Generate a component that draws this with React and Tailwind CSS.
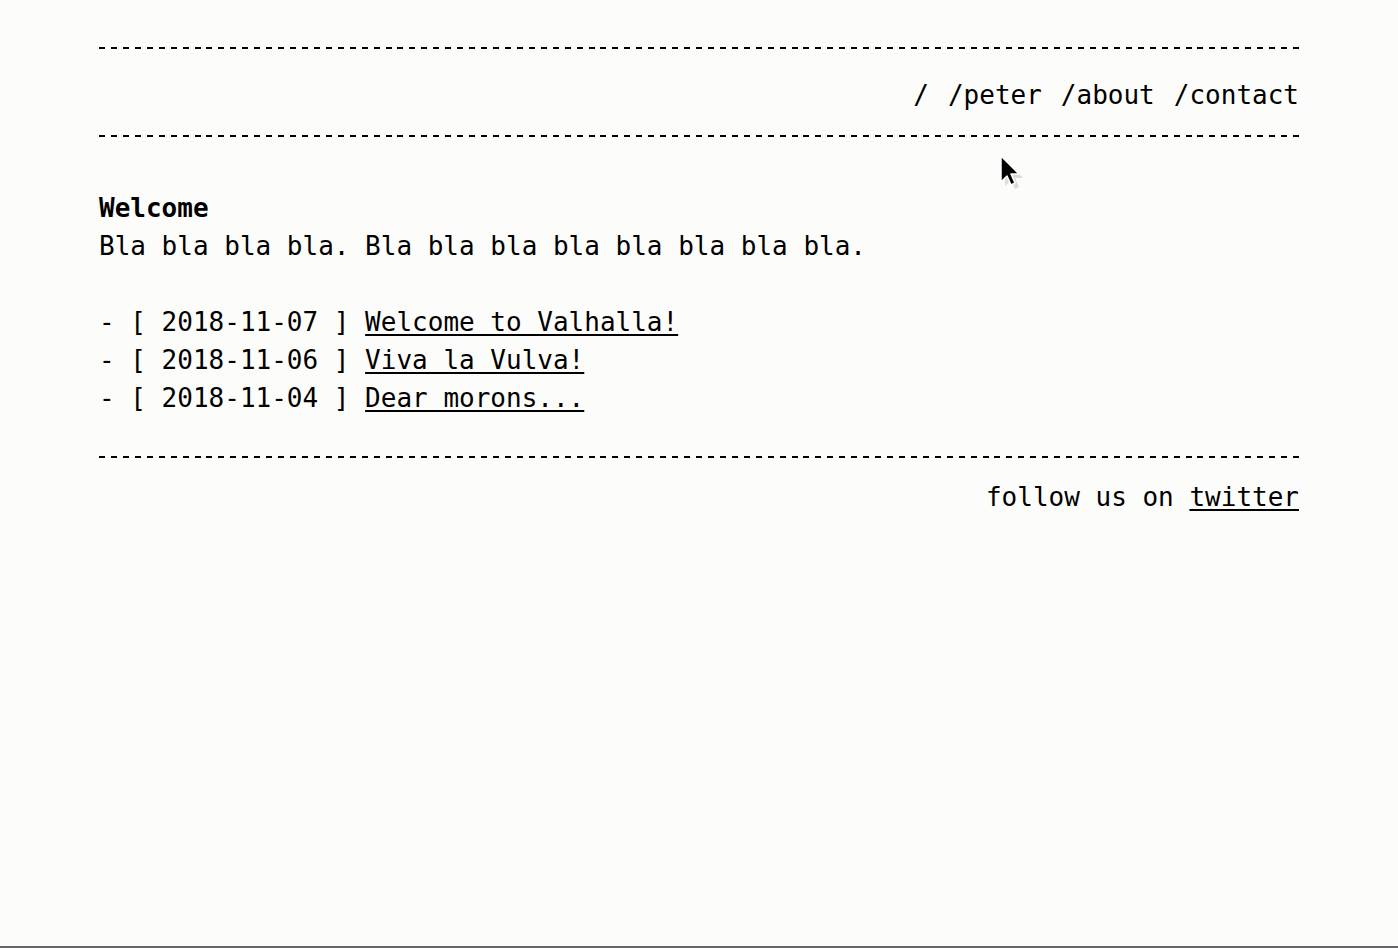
import React from 'react';

const posts = [
  { date: '2018-11-07', title: 'Welcome to Valhalla!' },
  { date: '2018-11-06', title: 'Viva la Vulva!' },
  { date: '2018-11-04', title: 'Dear morons...' },
];

// linea discontinua (6px trazo / ~6px hueco, termina con trazo)
const Dash = () => (
  <div className="h-[2px] bg-[repeating-linear-gradient(to_right,#000_0px,#000_6px,transparent_6px,transparent_11.94px)]" />
);

const Cursor = () => (
  <svg
    className="absolute left-[998px] top-[154px] pointer-events-none"
    width="26"
    height="36"
    viewBox="0 0 26 36"
  >
    <path d="M5 4 L5 30 L11 24 L15 33 L19 31 L15 22 L23 22 Z" fill="#bbb" opacity="0.5" transform="translate(2 2)" />
    <path d="M3 2 L3 28 L9 22 L13 31 L17 29 L13 20 L21 20 Z" fill="#000" stroke="#fff" strokeWidth="1.5" strokeLinejoin="round" />
  </svg>
);

const App = () => {
  return (
    <div className="relative min-h-[948px] flex flex-col bg-[#fcfcfa] text-black font-['DejaVu_Sans_Mono',monospace] text-[26px] leading-[38px]">
      <div className="flex-1">
        <div className="w-[1200px] mx-auto pt-[47px]">
          {/* Cabecera */}
          <Dash />
          <nav className="flex justify-end gap-[19px] pt-[27px] pb-[21px]">
            <a href="#">/</a>
            <a href="#">/peter</a>
            <a href="#">/about</a>
            <a href="#">/contact</a>
          </nav>
          <Dash />

          <main className="pt-[52px] pb-[39px]">
            <h1 className="font-bold">Welcome</h1>
            <p>Bla bla bla bla. Bla bla bla bla bla bla bla bla.</p>

            <ul className="mt-[38px]">
              {posts.map((post) => (
                <li key={post.date} className="whitespace-pre">
                  {'- [ ' + post.date + ' ] '}
                  <a href="#" className="underline underline-offset-[3px]">{post.title}</a>
                </li>
              ))}
            </ul>
          </main>

          <Dash />
          <footer className="pt-[20px] text-right whitespace-pre">
            {'follow us on '}
            <a href="#" className="underline underline-offset-[3px]">twitter</a>
          </footer>
        </div>
      </div>
      <div className="h-[2px] bg-[#666]" />
      <Cursor />
    </div>
  );
};

export default App;
